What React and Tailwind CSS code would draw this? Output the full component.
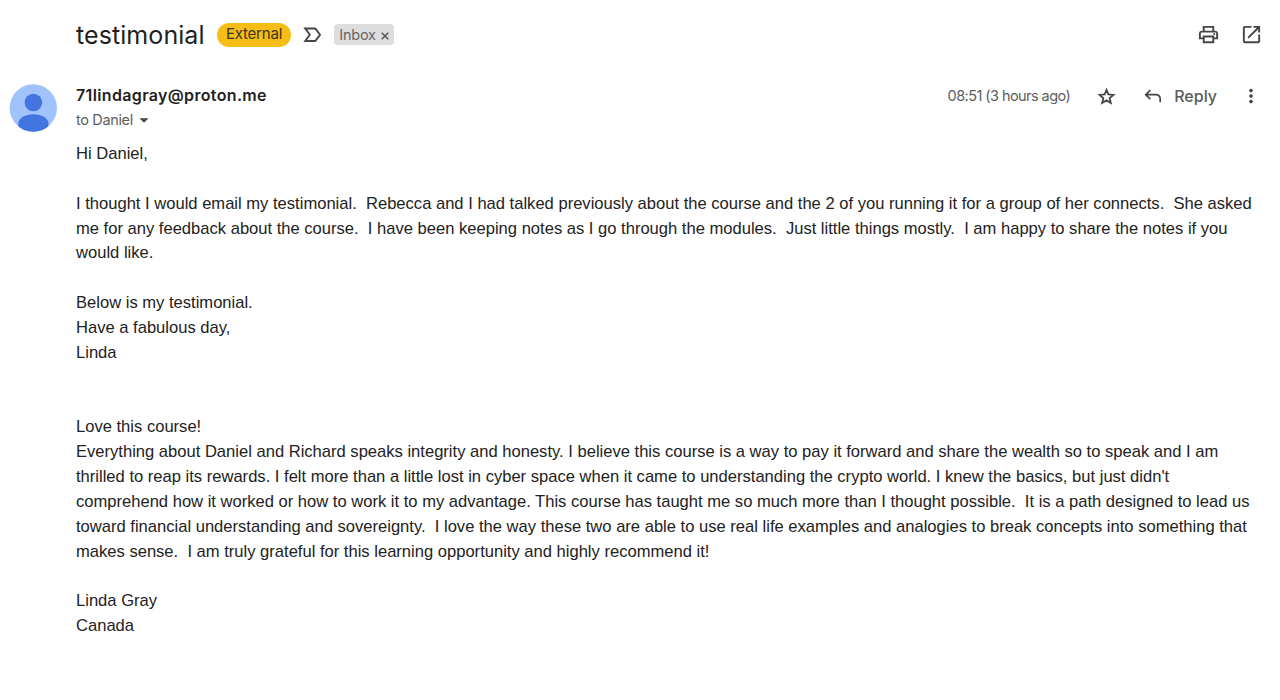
import { MdArrowDropDown, MdMoreVert, MdOpenInNew, MdOutlinePrint } from "react-icons/md";

const intro = [
  "Hi Daniel,",
  "",
  "I thought I would email my testimonial.  Rebecca and I had talked previously about the course and the 2 of you running it for a group of her connects.  She asked",
  "me for any feedback about the course.  I have been keeping notes as I go through the modules.  Just little things mostly.  I am happy to share the notes if you",
  "would like.",
  "",
  "Below is my testimonial.",
  "Have a fabulous day,",
  "Linda",
  "",
  "",
];

const testimonial = [
  "Love this course!",
  "Everything about Daniel and Richard speaks integrity and honesty. I believe this course is a way to pay it forward and share the wealth so to speak and I am",
  "thrilled to reap its rewards. I felt more than a little lost in cyber space when it came to understanding the crypto world. I knew the basics, but just didn't",
  "comprehend how it worked or how to work it to my advantage. This course has taught me so much more than I thought possible.  It is a path designed to lead us",
  "toward financial understanding and sovereignty.  I love the way these two are able to use real life examples and analogies to break concepts into something that",
  "makes sense.  I am truly grateful for this learning opportunity and highly recommend it!",
  "",
  "Linda Gray",
  "Canada",
];

const Avatar = () => (
  <svg className="w-12 h-12 shrink-0" viewBox="0 0 48 48">
    <defs>
      <clipPath id="avatar-clip">
        <circle cx="24.3" cy="24" r="23.7" />
      </clipPath>
    </defs>
    <g clipPath="url(#avatar-clip)">
      <rect width="48" height="48" fill="#a1c3fb" />
      <circle cx="24.4" cy="18.5" r="8.8" fill="#4374e0" />
      <path d="M9.300 48V39.500c0-5.500 7-9.300 15.100-9.300s15.100 3.800 15.100 9.300V48z" fill="#4374e0" />
    </g>
  </svg>
);

const ImportanceMarker = () => (
  <svg className="w-[18px] h-4 shrink-0" viewBox="0 0 18 16" fill="none" stroke="#444746" strokeWidth="1.9">
    <path d="M2.200 1.500H12.300L17 7.800l-4.700 6.200H2.200L6.800 7.800z" />
  </svg>
);

const StarIcon = () => (
  <svg className="w-[21px] h-[21px] ml-[26px] mt-px shrink-0" viewBox="0 0 24 24" fill="none" stroke="#444746" strokeWidth="2.1">
    <path d="M12 4.500l2.200 5.200 5.700.5-4.300 3.700 1.300 5.500L12 16.500l-4.900 2.900 1.300-5.500-4.300-3.700 5.700-.5z" />
  </svg>
);

const ReplyIcon = () => (
  <svg className="w-[18px] h-4 shrink-0" viewBox="0 0 18 16" fill="none" stroke="#444746" strokeWidth="1.7">
    <path d="M6.300 2.200 1.700 6.700l4.600 4.500M2 6.700h10.200a4 4 0 0 1 4 4v3.500" />
  </svg>
);

const SubjectBar = () => (
  <header className="flex items-center h-[69px] pl-[76px] pr-[17px] text-[#444746]">
    <h1 className="w-[141px] text-[25px] leading-8 tracking-[0.08px] text-[#1f1f1f]">testimonial</h1>
    <span className="flex items-center justify-center w-[74px] h-6 rounded-full bg-[#f6bd16] text-[15px] tracking-[-0.2px] text-[#3c3418] whitespace-nowrap">
      External
    </span>
    <div className="ml-3 mr-[13px]">
      <ImportanceMarker />
    </div>
    <span className="flex items-center justify-center gap-[5px] w-[60px] h-[21px] rounded-[4px] bg-[#dddddd] text-[14.5px] leading-5 tracking-[-0.2px] text-[#666666]">
      Inbox
      <svg className="w-2 h-2 mt-0.5" viewBox="0 0 8 8" stroke="#555" strokeWidth="1.5">
        <path d="M.7.7l6.600 6.600M7.300.7.7 7.300" />
      </svg>
    </span>
    <div className="ml-auto flex items-center gap-5">
      <MdOutlinePrint className="w-[23px] h-[23px]" />
      <MdOpenInNew className="w-[23px] h-[23px]" />
    </div>
  </header>
);

const SenderRow = () => (
  <div className="flex pl-[9px] pr-[18px] h-[73px] pt-[15px] text-[#444746]">
    <Avatar />
    <div className="ml-[19px]">
      <div className="h-[23px] leading-[23px] text-base font-semibold tracking-[0.35px] text-[#1f1f1f]">
        71lindagray@proton.me
      </div>
      <div className="flex items-center h-[25px] text-[14.500px] tracking-[-0.35px] text-[#5e5e5e]">
        to Daniel
        <MdArrowDropDown className="w-[22px] h-[22px] text-[#444746]" />
      </div>
    </div>
    <div className="ml-auto flex items-center h-6">
      <span className="text-[14.500px] tracking-[-0.56px] text-[#5e5e5e] whitespace-nowrap">08:51 (3 hours ago)</span>
      <StarIcon />
      <div className="flex items-center gap-3 ml-[27px]">
        <ReplyIcon />
        <span className="text-base font-medium text-[#5a5c5b]">Reply</span>
      </div>
      <MdMoreVert className="w-[22px] h-[22px] ml-[23px]" />
    </div>
  </div>
);

const App = () => {
  return (
    <div className="w-[1280px] h-[700px] overflow-hidden bg-white font-['Inter',sans-serif]">
      <SubjectBar />
      <SenderRow />
      <main className="pl-[76px] font-['Liberation_Sans',Arial,sans-serif] text-[16.573px] leading-[24.860px] text-[#222222]">
        {[...intro, ...testimonial].map((line, i) => (
          <p key={i} className="h-[24.860px] whitespace-pre">
            {line}
          </p>
        ))}
      </main>
    </div>
  );
};

export default App;
